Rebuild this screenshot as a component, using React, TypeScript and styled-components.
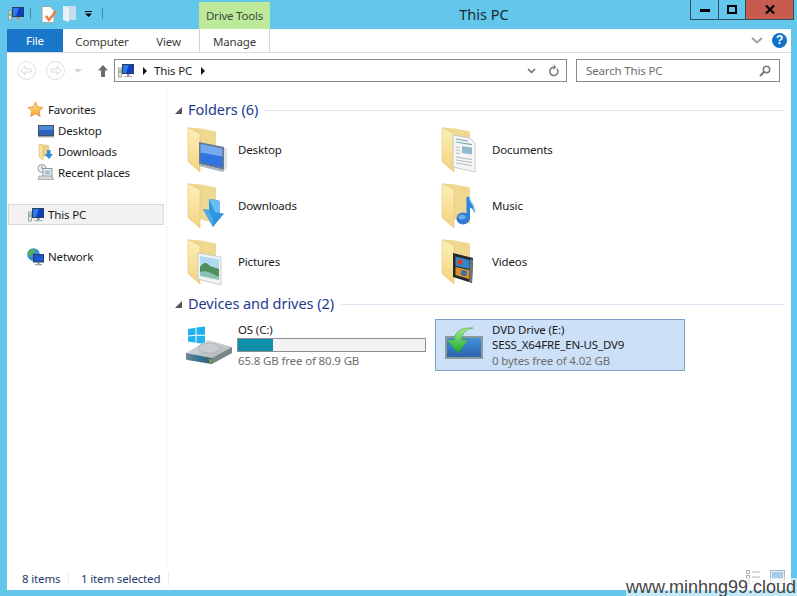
import React from "react";
import { createGlobalStyle, styled } from "styled-components";

const GlobalStyle = createGlobalStyle`
  html, body {
    margin: 0;
    padding: 0;
    background: #62c7ea;
  }
  * {
    box-sizing: border-box;
  }
`;

type FolderKind = "desktop" | "documents" | "downloads" | "music" | "pictures" | "videos";

const folders: { name: string; kind: FolderKind }[] = [
  { name: "Desktop", kind: "desktop" },
  { name: "Documents", kind: "documents" },
  { name: "Downloads", kind: "downloads" },
  { name: "Music", kind: "music" },
  { name: "Pictures", kind: "pictures" },
  { name: "Videos", kind: "videos" },
];

const PcIcon = () => (
  <svg width="16" height="16" viewBox="0 0 16 16">
    <rect x="0.5" y="5" width="3" height="9" fill="#dfe6e4" stroke="#7d8a86" strokeWidth="0.7" />
    <rect x="1.4" y="7" width="1.2" height="3" fill="#58b548" />
    <rect x="4" y="1" width="12" height="10" fill="#2b3f57" />
    <rect x="5" y="2" width="10" height="8" fill="#0f3fc4" />
    <path d="M5 2h6l-3 8H5z" fill="#2f78e8" />
    <path d="M9 11h2.5v2H9z" fill="#8b979c" />
    <path d="M6.5 13h7.5v1.2H6.5z" fill="#a7b2b6" />
  </svg>
);

const StarIcon = () => (
  <svg width="17" height="17" viewBox="0 0 17 17">
    <defs>
      <linearGradient id="starFill" x1="0" y1="0" x2="0" y2="1">
        <stop offset="0" stopColor="#ffe08a" />
        <stop offset="1" stopColor="#f6a63a" />
      </linearGradient>
    </defs>
    <path
      d="M8.5 1l2.2 5 5.3.5-4 3.6 1.2 5.4-4.7-2.8-4.7 2.8 1.2-5.4-4-3.6 5.3-.5z"
      fill="url(#starFill)"
      stroke="#e8913a"
      strokeWidth="0.9"
    />
  </svg>
);

const DesktopSmall = () => (
  <svg width="16" height="16" viewBox="0 0 16 16">
    <rect x="0" y="2" width="16" height="11" fill="#3f4f66" />
    <rect x="1" y="3" width="14" height="9" fill="#2d63bf" />
    <rect x="1" y="3" width="14" height="4" fill="#4f88dc" />
    <rect x="0" y="13" width="16" height="1.4" fill="#9aa3aa" />
  </svg>
);

const DownloadsSmall = () => (
  <svg width="16" height="16" viewBox="0 0 16 16">
    <path d="M1 0l10 1v12L1 12z" fill="#eed188" />
    <path d="M1 0l4 2v14l-4-3z" fill="#f8e49f" stroke="#d3b263" strokeWidth="0.5" />
    <path d="M9 6h3.5v4H15l-4 5-4.5-5H9z" fill="#2a8fdc" />
  </svg>
);

const RecentSmall = () => (
  <svg width="17" height="17" viewBox="0 0 17 17">
    <circle cx="5" cy="4.5" r="4" fill="#f1f3f4" stroke="#8f9aa0" />
    <path d="M5 2v2.6h2" fill="none" stroke="#5f6b70" strokeWidth="0.8" />
    <rect x="6" y="4.5" width="9" height="8" fill="#e6ecef" stroke="#8d999f" />
    <rect x="8" y="6.5" width="5" height="4" fill="#9fc4dc" />
    <path d="M2 12h13l1.5 3.5H1z" fill="#d4dadd" stroke="#8d999f" strokeWidth="0.7" />
  </svg>
);

const NetworkIcon = () => (
  <svg width="17" height="18" viewBox="0 0 17 18">
    <circle cx="6.5" cy="6.5" r="6.3" fill="#2f8fd8" />
    <path d="M2.5 2.2c2-1.6 4.4-1.4 5.4 0 .4 1.6-1.4 2.4-2.4 3.4L3.4 9.4C1.4 7.6.8 4.6 2.5 2.2z" fill="#56b04a" />
    <rect x="6" y="6" width="11" height="8.5" fill="#27405e" />
    <rect x="7" y="7" width="9" height="6.5" fill="#1f56d0" />
    <path d="M10.5 14.5h2V16h-2z" fill="#7f8b90" />
    <path d="M8 16h7v1.2H8z" fill="#98a4a8" />
  </svg>
);

const FolderOverlay = ({ kind }: { kind: FolderKind }) => {
  if (kind === "desktop") {
    return (
      <g>
        <path d="M13 16l25 5v23l-25-6z" fill="#6c7a86" />
        <path d="M14.5 18l22 4.4v19l-22-5z" fill="#2f74e0" />
        <path d="M14.5 18l22 4.4v8l-22-4z" fill="#77a9ee" />
        <path d="M13 38l25 6-1 2-24-6z" fill="#aab3b8" />
        <path d="M38 21l3 2v19l-3 3z" fill="#c9ced1" opacity="0.6" />
      </g>
    );
  }
  if (kind === "downloads") {
    return (
      <g>
        <path d="M17 27l6 1V17l8 1c2 0 3 2 3 4v9l4 .6L27 45z" fill="#2c95e0" />
        <path d="M23 17l8 1c2 0 3 2 3 4v9l-5-.8z" fill="#67bff0" />
        <path d="M17 27l10 18 0-8-4-9z" fill="#4fa8e6" />
      </g>
    );
  }
  if (kind === "pictures") {
    return (
      <g>
        <path d="M12 15l23 4v28l-23-6z" fill="#f1f4f5" stroke="#bcc4c7" strokeWidth="0.8" />
        <path d="M14 18l19 3.2V36l-19-4z" fill="#b1daef" />
        <path d="M14 29c4-6 7-4 10-1l9 3v8l-19-4z" fill="#4f8f5c" />
        <path d="M14 34c6-2 11 1 19 5v3l-19-4z" fill="#8cc0b0" />
      </g>
    );
  }
  if (kind === "documents") {
    return (
      <g>
        <path d="M13 9l17 3 5 5v29l-22-5z" fill="#f5f6f4" stroke="#bcc2c4" strokeWidth="0.8" />
        <path d="M16 13l12 2M16 16l16 2.6" stroke="#7ea6b4" strokeWidth="1.2" />
        <path d="M22 20l10 1.5v7L22 27z" fill="#8fbccc" />
        <path d="M16 21l4 .6M16 24l4 .6M16 27l4 .6M16 31l16 2.6M16 34l16 2.6M16 37l16 2.6" stroke="#b3bcc0" strokeWidth="1" />
      </g>
    );
  }
  if (kind === "music") {
    return (
      <g>
        <ellipse cx="23" cy="36.5" rx="6.5" ry="6" fill="#2f78d0" />
        <path d="M26.5 37V15l2.5-.5c1 6 7 8 5.5 17-1-4-2.5-5-4.5-6V38z" fill="#2f83d6" />
        <path d="M29 15c1 6 4.500 8 5 13" stroke="#7fbdf0" strokeWidth="1" fill="none" />
        <ellipse cx="22" cy="35" rx="3.5" ry="2.500" fill="#6eaeea" />
      </g>
    );
  }
  return (
    <g>
      <path d="M13 15l20 5-1 25-19-6z" fill="#23282b" />
      <path d="M15.500 18.500l14 3.500v9l-14-3z" fill="#2f86c8" />
      <path d="M15.500 29l14 3-.5 9-13.500-4z" fill="#d98f2a" />
      <circle cx="20" cy="24" r="2.700" fill="#d23d2f" />
      <circle cx="24" cy="35" r="3" fill="#3d6fb0" />
      <path d="M30 21l3 .8-1 23-3-1z" fill="#6d7478" />
    </g>
  );
};

const FolderIcon = ({ kind }: { kind: FolderKind }) => (
  <svg width="48" height="48" viewBox="0 0 48 48">
    <defs>
      <linearGradient id={`flap-${kind}`} x1="0" y1="0" x2="0" y2="1">
        <stop offset="0" stopColor="#fdf0b8" />
        <stop offset="1" stopColor="#f3d480" />
      </linearGradient>
    </defs>
    <path d="M2 1.500l13 1 15 3v36L2 34z" fill="#efd892" />
    <path d="M2 1.500l12 6V46L3 36.500c-.6-.5-1-1-1-2z" fill={`url(#flap-${kind})`} stroke="#e0c278" strokeWidth="0.6" />
    <FolderOverlay kind={kind} />
  </svg>
);

const HardDriveIcon = () => (
  <svg width="48" height="48" viewBox="0 0 48 48">
    <defs>
      <linearGradient id="driveTop" x1="0" y1="0" x2="1" y2="1">
        <stop offset="0" stopColor="#e6e8e9" />
        <stop offset="1" stopColor="#a7adb0" />
      </linearGradient>
      <linearGradient id="driveFront" x1="0" y1="0" x2="1" y2="0">
        <stop offset="0" stopColor="#74868f" />
        <stop offset="0.5" stopColor="#2f7398" />
        <stop offset="1" stopColor="#4a5a62" />
      </linearGradient>
    </defs>
    <path d="M2 8l7.500-1.200v7L2 14.500z" fill="#1fb2ee" />
    <path d="M10.500 6.600L19 5.500v8.200l-8.500.1z" fill="#1fb2ee" />
    <path d="M2 15.500l7.500-.7v7L2 20.500z" fill="#1fb2ee" />
    <path d="M10.500 14.800l8.500-.1V23l-8.500-1.100z" fill="#1fb2ee" />
    <path d="M0 32l22-13 24 7-20 11z" fill="url(#driveTop)" />
    <ellipse cx="23" cy="27" rx="11" ry="5" fill="#c9cdcf" stroke="#9ea4a7" strokeWidth="0.6" />
    <path d="M0 32l26 5v6L1 39c-.7-.2-1-.6-1-1.200z" fill="url(#driveFront)" />
    <path d="M26 37l20-11v5.500c0 .5-.2.8-.6 1L26 43z" fill="#7b8488" />
    <path d="M23.500 38l2 .4v3.300l-2-.4z" fill="#7bd23c" />
  </svg>
);

const DvdIcon = () => (
  <svg width="48" height="48" viewBox="0 0 48 48">
    <defs>
      <linearGradient id="dvdScreen" x1="0" y1="0" x2="0" y2="1">
        <stop offset="0" stopColor="#4590dc" />
        <stop offset="1" stopColor="#2a63ab" />
      </linearGradient>
      <linearGradient id="dvdArrow" x1="0" y1="0" x2="0" y2="1">
        <stop offset="0" stopColor="#a6ee8c" />
        <stop offset="1" stopColor="#14a82c" />
      </linearGradient>
    </defs>
    <rect x="5" y="15" width="38" height="23" fill="#8d9a9c" />
    <rect x="7" y="17" width="34" height="19" fill="url(#dvdScreen)" />
    <path d="M33 7c-8 1-11 6-11 12h6l-10 13-11-13h7c0-8 8-13 19-12z" fill="url(#dvdArrow)" stroke="#2f9a3c" strokeWidth="0.5" />
  </svg>
);

const BackArrow = ({ flip }: { flip?: boolean }) => (
  <svg width="19" height="19" viewBox="0 0 19 19">
    <circle cx="9.5" cy="9.5" r="9" fill="none" stroke="#dde1e4" />
    <path
      d={flip ? "M11 5l4.5 4.5L11 14v-3H5V8h6z" : "M8 5L3.5 9.5 8 14v-3h6V8H8z"}
      fill="none"
      stroke="#d5dadd"
    />
  </svg>
);

const App = () => {
  return (
    <>
      <GlobalStyle />
      <Window>
        <TitleBar>
          <QuickAccess>
            <PcIcon />
            <QatSeparator />
            <svg width="16" height="17" viewBox="0 0 16 17">
              <path d="M1 .5h8l4 4v12H1z" fill="#fbfcfc" stroke="#9da6aa" />
              <path d="M5 10l3 4 7-9" fill="none" stroke="#ef7d3c" strokeWidth="2.4" />
            </svg>
            <svg width="14" height="16" viewBox="0 0 14 16">
              <path d="M0 0h13v14H0z" fill="#c9dcec" />
              <path d="M0 0l6 2v14l-6-2z" fill="#e8f1f8" />
            </svg>
            <QatDropdown>
              <svg width="7" height="6" viewBox="0 0 7 6">
                <path d="M0 0h7v1H0zM0 2.500h7L3.500 6z" fill="#000" />
              </svg>
            </QatDropdown>
            <QatSeparator />
          </QuickAccess>
          <ContextTab>Drive Tools</ContextTab>
          <WindowTitle>This PC</WindowTitle>
          <WindowButtons>
            <CaptionButton>
              <svg width="10" height="4" viewBox="0 0 10 4">
                <rect width="10" height="3" y="1" fill="#000" />
              </svg>
            </CaptionButton>
            <CaptionButton>
              <svg width="10" height="9" viewBox="0 0 10 9">
                <rect x="1" y="1" width="8" height="7" fill="none" stroke="#000" strokeWidth="2" />
              </svg>
            </CaptionButton>
            <CaptionButton $close>
              <svg width="10" height="9" viewBox="0 0 10 9">
                <path d="M1 0.500l8 8M9 0.500l-8 8" stroke="#000" strokeWidth="2.200" />
              </svg>
            </CaptionButton>
          </WindowButtons>
        </TitleBar>

        <Body>
          <Ribbon>
            <FileTab>File</FileTab>
            <RibbonTab $width={78}>Computer</RibbonTab>
            <RibbonTab $width={55}>View</RibbonTab>
            <ManageTab>Manage</ManageTab>
            <RibbonEnd>
              <svg width="12" height="7" viewBox="0 0 12 7">
                <path d="M1 1l5 4.500L11 1" fill="none" stroke="#9aa0a4" strokeWidth="2" />
              </svg>
              <HelpBadge>?</HelpBadge>
            </RibbonEnd>
          </Ribbon>

          <NavBar>
            <BackArrow />
            <BackArrow flip />
            <HistoryCaret />
            <svg width="12" height="14" viewBox="0 0 12 14">
              <path d="M6 1L1 6.500h3V13h4V6.500h3z" fill="#6c6c6c" />
            </svg>
            <AddressBox>
              <PcIcon />
              <Crumb />
              <AddressText>This PC</AddressText>
              <Crumb />
              <AddressTools>
                <svg width="9" height="6" viewBox="0 0 9 6">
                  <path d="M1 1l3.500 3.500L8 1" fill="none" stroke="#666" strokeWidth="1.500" />
                </svg>
                <svg width="11" height="13" viewBox="0 0 12 13">
                  <path d="M9.800 4.600A4.500 4.500 0 1 1 6 3" fill="none" stroke="#777" strokeWidth="1.600" />
                  <path d="M6 0v6l3-3z" fill="#777" />
                </svg>
              </AddressTools>
            </AddressBox>
            <SearchBox>
              <SearchHint>Search This PC</SearchHint>
              <svg width="12" height="12" viewBox="0 0 12 12">
                <circle cx="7.500" cy="4.500" r="3.200" fill="none" stroke="#7a7a7a" strokeWidth="1.500" />
                <path d="M5 7l-4 4" stroke="#7a7a7a" strokeWidth="2" />
              </svg>
            </SearchBox>
          </NavBar>

          <Content>
            <NavPane>
              <NavGroup>
                <NavRow>
                  <NavIconSlot><StarIcon /></NavIconSlot>
                  Favorites
                </NavRow>
                <NavRow $indent>
                  <NavIconSlot><DesktopSmall /></NavIconSlot>
                  Desktop
                </NavRow>
                <NavRow $indent>
                  <NavIconSlot><DownloadsSmall /></NavIconSlot>
                  Downloads
                </NavRow>
                <NavRow $indent>
                  <NavIconSlot><RecentSmall /></NavIconSlot>
                  Recent places
                </NavRow>
              </NavGroup>
              <NavGroup>
                <NavRow $selected>
                  <NavIconSlot><PcIcon /></NavIconSlot>
                  This PC
                </NavRow>
              </NavGroup>
              <NavGroup>
                <NavRow>
                  <NavIconSlot><NetworkIcon /></NavIconSlot>
                  Network
                </NavRow>
              </NavGroup>
            </NavPane>

            <MainPane>
              <GroupHeader>
                <Collapse />
                <GroupTitle>Folders (6)</GroupTitle>
                <GroupLine />
              </GroupHeader>
              <FolderGrid>
                {folders.map((f) => (
                  <FolderTile key={f.name}>
                    <FolderIcon kind={f.kind} />
                    <FolderName>{f.name}</FolderName>
                  </FolderTile>
                ))}
              </FolderGrid>

              <GroupHeader $second>
                <Collapse />
                <GroupTitle>Devices and drives (2)</GroupTitle>
                <GroupLine />
              </GroupHeader>
              <DriveGrid>
                <DriveTile>
                  <HardDriveIcon />
                  <DriveInfo>
                    <DriveLine>OS (C:)</DriveLine>
                    <UsageBar>
                      <UsageFill style={{ width: `${(15.1 / 80.9) * 100}%` }} />
                    </UsageBar>
                    <DriveLine $muted>65.8 GB free of 80.9 GB</DriveLine>
                  </DriveInfo>
                </DriveTile>
                <DriveTile $selected>
                  <DvdIcon />
                  <DriveInfo>
                    <DriveLine>DVD Drive (E:)</DriveLine>
                    <DriveLine>SESS_X64FRE_EN-US_DV9</DriveLine>
                    <DriveLine $muted>0 bytes free of 4.02 GB</DriveLine>
                  </DriveInfo>
                </DriveTile>
              </DriveGrid>
            </MainPane>
          </Content>

          <StatusBar>
            <StatusCell $width={47}>8 items</StatusCell>
            <StatusCell $width={88}>1 item selected</StatusCell>
            <ViewToggles>
              <svg width="14" height="14" viewBox="0 0 14 14">
                <path d="M.5.5h3v3h-3zM.5 5.500h3v3h-3zM.5 10.500h3v3h-3z" fill="#fff" stroke="#a3aeb9" />
                <path d="M6 2h8M6 7h8M6 12h8" stroke="#b0b9c2" />
              </svg>
              <svg width="15" height="14" viewBox="0 0 15 14">
                <rect x="0.500" y="0.500" width="14" height="13" fill="#e6eff7" stroke="#a5b7c8" />
                <rect x="2" y="2" width="11" height="7" fill="#a9cbe6" />
              </svg>
            </ViewToggles>
          </StatusBar>
        </Body>

        <Watermark>www.minhng99.cloud</Watermark>
      </Window>
    </>
  );
};

export default App;

const Window = styled.div`
  position: relative;
  width: 797px;
  height: 596px;
  overflow: hidden;
  background: #62c7ea;
  padding: 0 6px 6px 7px;
  display: flex;
  flex-direction: column;
  font-family: "Noto Sans", "Open Sans", sans-serif;
  font-size: 11.5px;
  letter-spacing: -0.15px;
  color: #1a1a1a;
`;

const TitleBar = styled.div`
  height: 29px;
  flex: none;
  display: flex;
  align-items: flex-start;
`;

const QuickAccess = styled.div`
  width: 192px;
  height: 29px;
  padding: 6px 0 0 1px;
  display: flex;
  align-items: flex-start;
  gap: 6px;
`;

const QatSeparator = styled.div`
  width: 1px;
  height: 11px;
  margin: 2px 4px 0 0;
  background: #4f8aa3;
`;

const QatDropdown = styled.div`
  width: 7px;
  height: 16px;
  margin: 0 4px 0 2px;
  display: flex;
  align-items: center;
`;

const ContextTab = styled.div`
  width: 71px;
  height: 27px;
  margin-top: 2px;
  background: #bde99a;
  color: #3c4a3c;
  display: flex;
  align-items: center;
  justify-content: center;
  letter-spacing: -0.2px;
  white-space: nowrap;
`;

const WindowTitle = styled.div`
  flex: 1;
  height: 27px;
  padding-left: 8px;
  display: flex;
  align-items: center;
  justify-content: center;
  font-size: 14.5px;
  letter-spacing: 0;
  color: #1c2a30;
`;

const WindowButtons = styled.div`
  margin-right: -3px;
  height: 20px;
  display: flex;
  border: 1px solid #2d4f60;
  border-top: none;
`;

const CaptionButton = styled.div<{ $close?: boolean }>`
  width: ${(p) => (p.$close ? "48px" : "27px")};
  display: flex;
  align-items: center;
  justify-content: center;
  background: ${(p) => (p.$close ? "#c75b50" : "transparent")};
  & + & {
    border-left: 1px solid #2d4f60;
  }
`;

const Body = styled.div`
  flex: 1;
  min-height: 0;
  background: #fff;
  display: flex;
  flex-direction: column;
`;

const Ribbon = styled.div`
  height: 24px;
  flex: none;
  display: flex;
  border-bottom: 1px solid #dadbdc;
`;

const FileTab = styled.div`
  width: 56px;
  height: 23px;
  background: #1a76c8;
  color: #fff;
  display: flex;
  align-items: center;
  justify-content: center;
`;

const RibbonTab = styled.div<{ $width: number }>`
  width: ${(p) => p.$width}px;
  height: 23px;
  padding-top: 2px;
  display: flex;
  align-items: center;
  justify-content: center;
  color: #3b3b3b;
`;

const ManageTab = styled(RibbonTab).attrs({ $width: 71 })`
  margin-left: 3px;
  border-left: 1px solid #d2d4d6;
  border-right: 1px solid #d2d4d6;
`;

const RibbonEnd = styled.div`
  flex: 1;
  display: flex;
  align-items: center;
  justify-content: flex-end;
  gap: 9px;
  padding-right: 4px;
`;

const HelpBadge = styled.div`
  width: 15px;
  height: 15px;
  border-radius: 50%;
  background: #1272c9;
  color: #fff;
  font-family: "Liberation Sans", sans-serif;
  font-weight: 700;
  font-size: 12px;
  line-height: 15px;
  text-align: center;
`;

const NavBar = styled.div`
  height: 36px;
  flex: none;
  padding: 6px 11px 7px 10px;
  display: flex;
  align-items: center;
  & > svg:nth-child(2) {
    margin-left: 10px;
  }
  & > svg:nth-child(4) {
    margin-left: 15px;
  }
`;

const HistoryCaret = styled.div`
  width: 0;
  height: 0;
  margin-left: 9px;
  border-left: 4px solid transparent;
  border-right: 4px solid transparent;
  border-top: 4px solid #d4d8db;
`;

const AddressBox = styled.div`
  flex: 1;
  height: 23px;
  margin: 0 9px 0 5px;
  padding: 0 7px 0 3px;
  border: 1px solid #8a8a8a;
  display: flex;
  align-items: center;
`;

const Crumb = styled.div`
  width: 0;
  height: 0;
  margin: 0 7px 0 9px;
  border-top: 4px solid transparent;
  border-bottom: 4px solid transparent;
  border-left: 4px solid #111;
`;

const AddressText = styled.span`
  color: #1a1a1a;
`;

const AddressTools = styled.div`
  margin-left: auto;
  display: flex;
  align-items: center;
  gap: 12px;
`;

const SearchBox = styled.div`
  width: 204px;
  height: 23px;
  padding: 0 8px 0 9px;
  border: 1px solid #8a8a8a;
  display: flex;
  align-items: center;
  justify-content: space-between;
`;

const SearchHint = styled.span`
  color: #6d6d6d;
`;

const Content = styled.div`
  flex: 1;
  min-height: 0;
  display: flex;
`;

const NavPane = styled.div`
  width: 160px;
  flex: none;
  padding: 10px 2px 0 1px;
  border-right: 1px solid #f1f2f3;
  display: flex;
  flex-direction: column;
  gap: 21px;
`;

const NavGroup = styled.div`
  display: flex;
  flex-direction: column;
`;

const NavRow = styled.div<{ $indent?: boolean; $selected?: boolean }>`
  height: 21px;
  padding-left: ${(p) => (p.$indent ? "28px" : "18px")};
  display: flex;
  align-items: center;
  gap: 4px;
  white-space: nowrap;
  color: #1a1a1a;
  border: 1px solid ${(p) => (p.$selected ? "#d9d9d9" : "transparent")};
  background: ${(p) => (p.$selected ? "#f2f2f2" : "transparent")};
`;

const NavIconSlot = styled.span`
  width: 17px;
  height: 17px;
  display: flex;
  align-items: center;
  justify-content: center;
`;

const MainPane = styled.div`
  flex: 1;
  min-width: 0;
  padding: 9px 7px 0 8px;
`;

const GroupHeader = styled.div<{ $second?: boolean }>`
  height: 24px;
  margin-top: ${(p) => (p.$second ? "2px" : "0")};
  display: flex;
  align-items: center;
`;

const Collapse = styled.div`
  width: 0;
  height: 0;
  margin-right: 6px;
  border-left: 7px solid transparent;
  border-bottom: 7px solid #555;
`;

const GroupTitle = styled.span`
  margin-bottom: 3px;
  font-size: 14.5px;
  letter-spacing: -0.05px;
  color: #1e3a8f;
  white-space: nowrap;
`;

const GroupLine = styled.div`
  flex: 1;
  height: 1px;
  margin-left: 7px;
  background: #dde7f4;
`;

const FolderGrid = styled.div`
  margin-left: 6px;
  display: grid;
  grid-template-columns: 254px 254px;
  grid-auto-rows: 56px;
`;

const FolderTile = styled.div`
  width: 250px;
  padding: 0 5px;
  display: flex;
  align-items: center;
  gap: 4px;
`;

const FolderName = styled.span`
  margin-bottom: 2px;
`;

const DriveGrid = styled.div`
  margin: 3px 0 0 6px;
  display: grid;
  grid-template-columns: 254px 254px;
`;

const DriveTile = styled.div<{ $selected?: boolean }>`
  width: 250px;
  height: 52px;
  padding: 0 4px;
  display: flex;
  align-items: center;
  gap: 4px;
  border: 1px solid ${(p) => (p.$selected ? "#7da2ce" : "transparent")};
  background: ${(p) => (p.$selected ? "#cce0f8" : "transparent")};
`;

const DriveInfo = styled.div`
  flex: 1;
  min-width: 0;
  display: flex;
  flex-direction: column;
  justify-content: center;
`;

const DriveLine = styled.div<{ $muted?: boolean }>`
  height: 15.5px;
  line-height: 15px;
  white-space: nowrap;
  color: ${(p) => (p.$muted ? "#6d6d6d" : "#1a1a1a")};
`;

const UsageBar = styled.div`
  width: 189px;
  height: 14px;
  margin: 1px 0 1px -1px;
  border: 1px solid #8e8e8e;
  background: #f3f3f3;
`;

const UsageFill = styled.div`
  height: 100%;
  background: #0f8ea9;
`;

const StatusBar = styled.div`
  height: 22px;
  flex: none;
  padding: 0 0 2px 15px;
  display: flex;
  align-items: center;
`;

const StatusCell = styled.div<{ $width: number }>`
  width: ${(p) => p.$width}px;
  height: 15px;
  margin-right: 12px;
  line-height: 15px;
  border-right: 1px solid #eeeeee;
  color: #1e3a6e;
  white-space: nowrap;
`;

const ViewToggles = styled.div`
  margin-left: auto;
  padding: 0 6px 3px 0;
  display: flex;
  align-items: center;
  gap: 10px;
`;

const Watermark = styled.div`
  position: absolute;
  right: 0;
  bottom: 0;
  width: 171px;
  height: 18px;
  background: rgba(255, 255, 255, 0.6);
  color: #444;
  font-family: "Liberation Sans", sans-serif;
  font-size: 18px;
  letter-spacing: 0;
  line-height: 18px;
  white-space: nowrap;
`;
